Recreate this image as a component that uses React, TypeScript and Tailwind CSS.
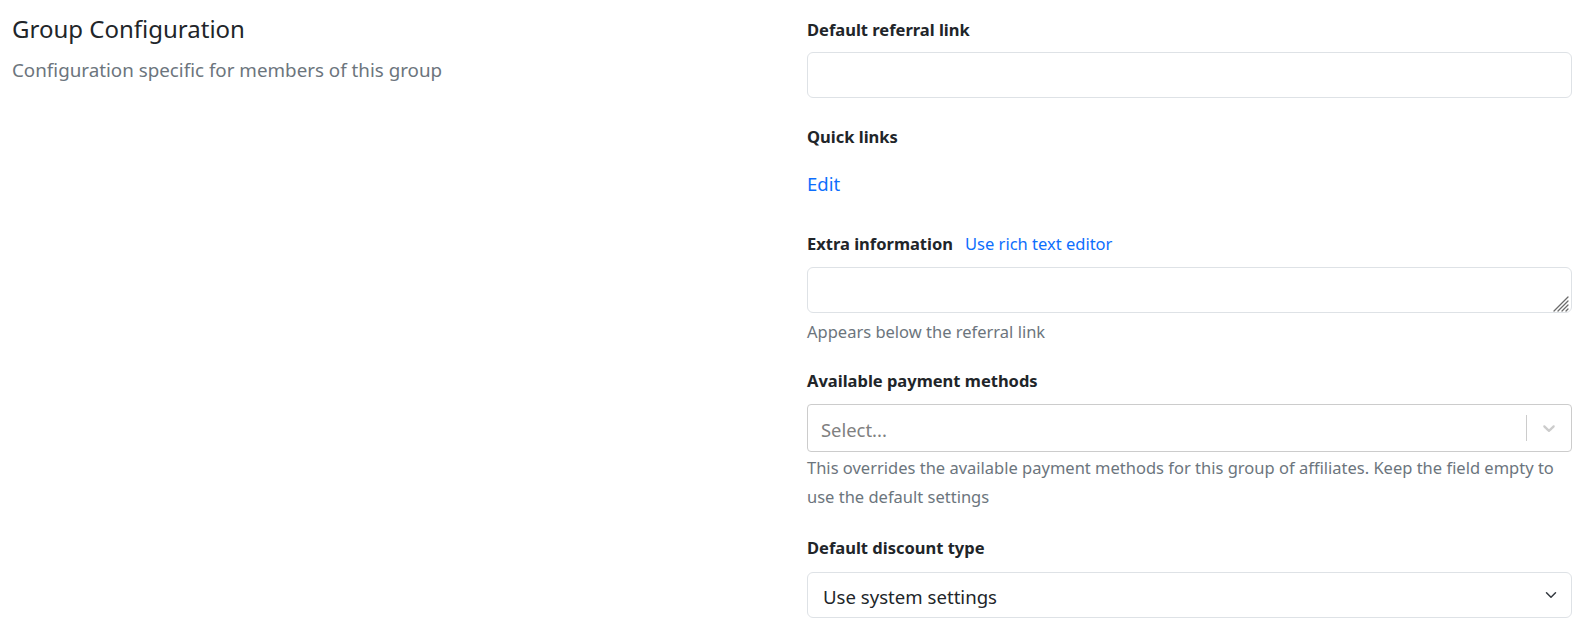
import React from "react";

export default function App() {
  return (
    <div className="flex w-[1582px] h-[628px] bg-white text-[#212529] font-['Noto_Sans',sans-serif]">
      <div className="w-[807px] pl-3 pt-[12px]">
        <h4 className="text-[24px] leading-[33px] font-normal text-[#212529]">Group Configuration</h4>
        <p className="mt-[12px] text-[18.8px] leading-[27px] text-[#6c757d]">Configuration specific for members of this group</p>
      </div>
      <div className="w-[765px] pt-[18px]">
        <label className="block text-[16.5px] leading-[24px] font-bold">Default referral link</label>
        <input className="mt-[10px] block w-full h-[46px] rounded-[6px] border border-[#dee2e6] px-3 outline-none" />

        <div className="mt-[27px] text-[16.5px] leading-[24px] font-bold">Quick links</div>
        <a className="mt-[21px] block text-[18.5px] leading-[27px] text-[#0d6efd] w-fit">Edit</a>

        <div className="mt-[35px] flex items-baseline gap-[12px]">
          <span className="text-[16.5px] leading-[24px] font-bold">Extra information</span>
          <a className="text-[16.5px] leading-[24px] text-[#0d6efd]">Use rich text editor</a>
        </div>
        <div className="relative mt-[11px]">
          <textarea className="block w-full h-[46px] resize-none rounded-[6px] border border-[#dee2e6] px-3 outline-none" />
          <svg className="absolute right-[2px] bottom-[1px]" width="18" height="18" viewBox="0 0 18 18">
            <g stroke="#6b6b6b" strokeWidth="1.3" strokeLinecap="round">
              <line x1="2" y1="17" x2="16" y2="3" />
              <line x1="6" y1="17" x2="16" y2="7" />
              <line x1="10" y1="17" x2="16" y2="11" />
              <line x1="14" y1="17" x2="16" y2="15" />
            </g>
          </svg>
        </div>
        <div className="mt-[7px] text-[16.5px] leading-[24px] text-[#6c757d]">Appears below the referral link</div>

        <div className="mt-[25px] text-[16.5px] leading-[24px] font-bold">Available payment methods</div>
        <div className="mt-[11px] flex h-[48px] items-center rounded-[4px] border border-[#cccccc] bg-white">
          <div className="flex-1 mt-[4px] pl-[13px] text-[18.4px] text-[#808080]">Select...</div>
          <div className="flex h-full items-center">
            <span className="h-[26px] w-px bg-[#cccccc]" />
            <div className="px-[12px] text-[#cccccc]">
              <svg width="20" height="20" viewBox="0 0 20 20" fill="currentColor">
                <path d="M4.516 7.548c0.436-0.446 1.043-0.481 1.576 0l3.908 3.747 3.908-3.747c0.533-0.481 1.141-0.446 1.574 0 0.436 0.445 0.408 1.197 0 1.615-0.406 0.418-4.695 4.502-4.695 4.502-0.217 0.223-0.502 0.335-0.787 0.335s-0.57-0.112-0.789-0.335c0 0-4.287-4.084-4.695-4.502s-0.436-1.17 0-1.615z" />
              </svg>
            </div>
          </div>
        </div>
        <div className="mt-[1px] text-[16.5px] leading-[29px] text-[#6c757d] pr-[10px]">
          This overrides the available payment methods for this group of affiliates. Keep the field empty to use the default settings
        </div>

        <div className="mt-[25px] text-[16.5px] leading-[24px] font-bold">Default discount type</div>
        <div className="mt-[12px] flex h-[46px] items-center justify-between rounded-[6px] border border-[#dee2e6] pl-[15px] pr-[12px]">
          <span className="mt-[4px] text-[18.6px] text-[#212529]">Use system settings</span>
          <svg width="16" height="12" viewBox="0 0 16 16">
            <path fill="none" stroke="#343a40" strokeLinecap="round" strokeLinejoin="round" strokeWidth="2" d="m2 5 6 6 6-6" />
          </svg>
        </div>
      </div>
    </div>
  );
}
